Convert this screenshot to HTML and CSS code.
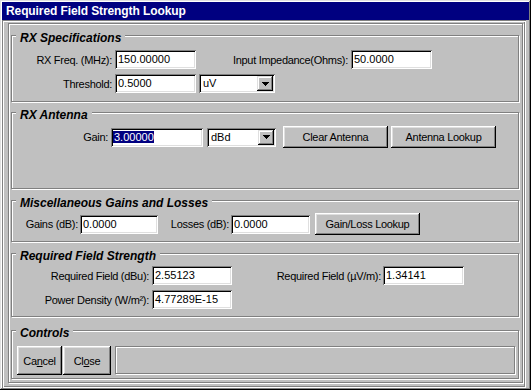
FILE: index.html
```html
<!DOCTYPE html>
<html lang="en">
<head>
<meta charset="utf-8">
<title>Required Field Strength Lookup</title>
<link rel="stylesheet" href="styles.css">
</head>
<body>
<div class="window">
  <div class="titlebar">Required Field Strength Lookup</div>
  <div class="client">
    <div class="frame">

      <div class="group g-rx">
        <div class="group-title">RX Specifications</div>
        <div class="row r-first-rx">
          <span class="label w100">RX Freq. (MHz):</span>
          <div class="field f81 ml3">150.00000</div>
          <span class="label w152">Input Impedance(Ohms):</span>
          <div class="field f81 ml3">50.0000</div>
        </div>
        <div class="row r-next">
          <span class="label w100">Threshold:</span>
          <div class="field f81 ml3">0.5000</div>
          <div class="field combo c-uv ml3">
            <span class="combo-text">uV</span>
            <span class="combo-btn"><svg width="7" height="4" viewBox="0 0 7 4" shape-rendering="crispEdges"><path d="M0 0h7v1h-1v1h-1v1h-1v1h-1v-1h-1v-1h-1v-1h-1z" fill="#000"/></svg></span>
          </div>
        </div>
      </div>

      <div class="group g-ant">
        <div class="group-title">RX Antenna</div>
        <div class="row r-first-ant">
          <span class="label w96">Gain:</span>
          <div class="field f92 ml3 sel-field"><span class="sel">3.00000</span></div>
          <div class="field combo c-dbd ml4">
            <span class="combo-text">dBd</span>
            <span class="combo-btn"><svg width="7" height="4" viewBox="0 0 7 4" shape-rendering="crispEdges"><path d="M0 0h7v1h-1v1h-1v1h-1v1h-1v-1h-1v-1h-1v-1h-1z" fill="#000"/></svg></span>
          </div>
          <button class="btn b-wide ml7">Clear Antenna</button>
          <button class="btn b-wide ml3">Antenna Lookup</button>
        </div>
      </div>

      <div class="group g-misc">
        <div class="group-title">Miscellaneous Gains and Losses</div>
        <div class="row r-first-misc">
          <span class="label w66">Gains (dB):</span>
          <div class="field f78 ml2">0.0000</div>
          <span class="label w71">Losses (dB):</span>
          <div class="field f79 ml2">0.0000</div>
          <button class="btn b-wide ml5">Gain/Loss Lookup</button>
        </div>
      </div>

      <div class="group g-req">
        <div class="group-title">Required Field Strength</div>
        <div class="row r-first-req">
          <span class="label w137">Required Field (dBu):</span>
          <div class="field f80 ml3">2.55123</div>
          <span class="label w149">Required Field (µV/m):</span>
          <div class="field f81 ml2">1.34141</div>
        </div>
        <div class="row r-next">
          <span class="label w137">Power Density (W/m²):</span>
          <div class="field f80 ml3">4.77289E-15</div>
        </div>
      </div>

      <div class="group g-ctl">
        <div class="group-title">Controls</div>
        <div class="row r-first-ctl">
          <button class="btn b-cancel">Ca<u>n</u>cel</button>
          <button class="btn b-close">Cl<u>o</u>se</button>
          <div class="status"></div>
        </div>
      </div>

    </div>
  </div>
</div>
</body>
</html>
```

FILE: styles.css
```css
html, body {
  margin: 0;
  padding: 0;
}

body {
  background: #c0c0c0;
  font-family: "Liberation Sans", Arial, sans-serif;
  font-size: 11px;
  color: #000;
}

.window {
  width: 531px;
  height: 390px;
  box-sizing: border-box;
  padding: 2px;
  background: #c0c0c0;
  box-shadow:
    inset -1px -1px 0 #000,
    inset 1px 1px 0 #dfdfdf,
    inset -2px -2px 0 #808080,
    inset 2px 2px 0 #fff;
}

.titlebar {
  height: 18px;
  line-height: 18px;
  background: #000080;
  color: #fff;
  font-weight: bold;
  font-size: 12px;
  letter-spacing: -0.1px;
  padding-left: 4px;
  white-space: nowrap;
}

.client {
  width: 524px;
  height: 368px;
  box-sizing: border-box;
  padding: 3px 0 0 6px;
  box-shadow:
    inset 1px 1px 0 #808080,
    inset -1px -1px 0 #fff,
    inset 2px 2px 0 #fff,
    inset -2px -2px 0 #808080;
}

.frame {
  width: 515px;
  height: 360px;
  box-sizing: border-box;
  border: 1px solid #808080;
  box-shadow: inset 1px 1px 0 #fff, 1px 1px 0 #fff;
  padding: 11px 0 0 2px;
}

.group {
  width: 508px;
  box-sizing: border-box;
  border: 1px solid #808080;
  box-shadow: inset 1px 1px 0 #fff, 1px 1px 0 #fff;
}

.g-rx { height: 67px; }
.g-ant { height: 77px; margin-top: 10px; }
.g-misc { height: 42px; margin-top: 11px; }
.g-req { height: 64px; margin-top: 11px; }
.g-ctl { height: 49px; margin-top: 13px; }

.group-title {
  width: fit-content;
  margin: -4px 0 0 4px;
  padding: 0 4px;
  background: #c0c0c0;
  font-weight: bold;
  font-style: italic;
  font-size: 12px;
  line-height: 13px;
  white-space: nowrap;
}

.row {
  display: flex;
  align-items: center;
}

.r-first-rx { margin-top: 5px; }
.r-first-ant { margin-top: 4px; }
.r-first-misc { margin-top: 3px; }
.r-first-req { margin-top: 3px; }
.r-first-ctl { margin-top: 6px; padding-left: 5px; align-items: flex-start; }
.r-next { margin-top: 5px; }

.label {
  flex: none;
  text-align: right;
  letter-spacing: -0.3px;
  white-space: nowrap;
}

.w66 { width: 66px; }
.w71 { width: 71px; }
.w96 { width: 96px; }
.w100 { width: 100px; }
.w137 { width: 137px; }
.w149 { width: 149px; }
.w152 { width: 152px; }

.ml2 { margin-left: 2px; }
.ml3 { margin-left: 3px; }
.ml4 { margin-left: 4px; }
.ml5 { margin-left: 5px; }
.ml7 { margin-left: 7px; }

.field {
  flex: none;
  box-sizing: border-box;
  height: 19px;
  line-height: 15px;
  padding: 2px 0 0 3px;
  background: #fff;
  white-space: nowrap;
  overflow: hidden;
  box-shadow:
    inset 1px 1px 0 #808080,
    inset -1px -1px 0 #fff,
    inset 2px 2px 0 #000,
    inset -2px -2px 0 #dfdfdf;
}

.f78 { width: 78px; }
.f79 { width: 79px; }
.f80 { width: 80px; }
.f81 { width: 81px; }
.f92 { width: 92px; }

.sel-field { padding-left: 2px; }

.sel {
  background: #000080;
  color: #fff;
  padding: 0 0 0 1px;
}

.combo {
  display: flex;
  align-items: center;
  justify-content: space-between;
  padding: 2px;
}

.c-uv { width: 76px; }
.c-dbd { width: 69px; }

.combo-text {
  padding-left: 2px;
  line-height: 15px;
}

.combo-btn {
  box-sizing: border-box;
  width: 16px;
  height: 15px;
  display: flex;
  align-items: center;
  justify-content: center;
  background: #c0c0c0;
  box-shadow:
    inset -1px -1px 0 #000,
    inset 1px 1px 0 #dfdfdf,
    inset -2px -2px 0 #808080,
    inset 2px 2px 0 #fff;
}

.combo-btn svg {
  display: block;
}

.btn {
  flex: none;
  box-sizing: border-box;
  height: 22px;
  margin-top: 0;
  margin-bottom: 0;
  padding: 0;
  border: 0;
  border-radius: 0;
  background: #c0c0c0;
  color: #000;
  font: inherit;
  letter-spacing: -0.3px;
  white-space: nowrap;
  box-shadow:
    inset -1px -1px 0 #000,
    inset 1px 1px 0 #fff,
    inset -2px -2px 0 #808080,
    inset 2px 2px 0 #dfdfdf;
}

.b-wide { width: 105px; }

.b-cancel { width: 45px; height: 29px; }
.b-close { width: 48px; height: 29px; margin-left: 1px; }

.btn u {
  text-decoration: underline;
  text-underline-offset: 1px;
}

.status {
  flex: none;
  width: 400px;
  height: 28px;
  box-sizing: border-box;
  margin-left: 4px;
  border: 1px solid #808080;
  box-shadow: inset 1px 1px 0 #fff, 1px 1px 0 #fff;
}
```
